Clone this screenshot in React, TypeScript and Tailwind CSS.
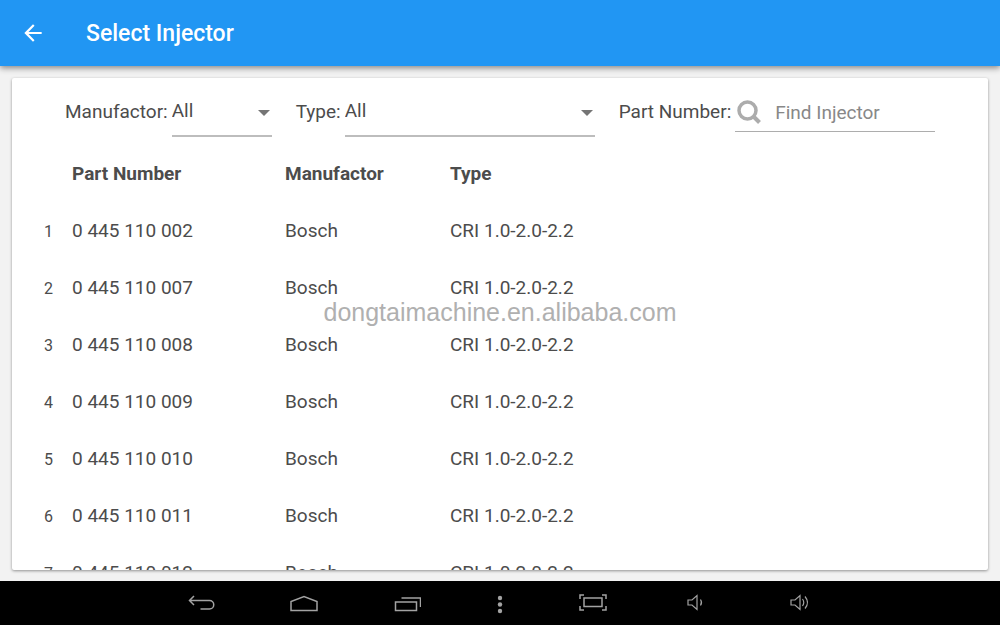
import type { ReactNode } from "react";

interface Injector {
  partNumber: string;
  manufactor: string;
  type: string;
}

const injectors: Injector[] = ["002", "007", "008", "009", "010", "011", "012"].map(
  (suffix) => ({
    partNumber: `0 445 110 ${suffix}`,
    manufactor: "Bosch",
    type: "CRI 1.0-2.0-2.2",
  })
);

interface FilterSelectProps {
  id: string;
  label: string;
  options: string[];
  className: string;
}

function FilterSelect({ id, label, options, className }: FilterSelectProps) {
  return (
    <div className="flex items-start gap-1">
      <label htmlFor={id} className="leading-9 whitespace-nowrap">
        {label}
      </label>
      <div className={`relative ${className}`}>
        <select
          id={id}
          className="block w-full h-[43px] pb-1.5 appearance-none bg-transparent border-b-2 border-[#bdbdbd] outline-none"
        >
          {options.map((option) => (
            <option key={option}>{option}</option>
          ))}
        </select>
        <svg
          viewBox="0 0 12 6"
          className="absolute right-0.5 top-4 w-3 h-1.5 fill-[#757575] pointer-events-none"
        >
          <path d="M0 0h12L6 6z" />
        </svg>
      </div>
    </div>
  );
}

interface NavButtonProps {
  label: string;
  narrow?: boolean;
  children: ReactNode;
}

function NavButton({ label, narrow, children }: NavButtonProps) {
  return (
    <button type="button" aria-label={label} className="block">
      <svg
        viewBox={narrow ? "0 0 8 20" : "0 0 28 20"}
        className={`${narrow ? "w-2" : "w-7"} h-5 fill-none stroke-[#a3a3a3]`}
        strokeWidth="1.5"
      >
        {children}
      </svg>
    </button>
  );
}

export default function App() {
  return (
    <div className="h-screen flex flex-col bg-[#f2f2f2] text-[19px] text-[#4c4c4c] font-[Roboto,sans-serif]">
      {/* App bar */}
      <header className="relative shrink-0 h-[66px] px-5 flex items-center gap-10 bg-[#2196f3] text-white shadow-[0_2px_6px_rgba(0,0,0,0.45)]">
        <button type="button" aria-label="Back">
          <svg viewBox="0 0 24 24" className="w-[26px] h-[26px] fill-white">
            <path d="M20 11H7.83l5.59-5.59L12 4l-8 8 8 8 1.41-1.41L7.83 13H20z" />
          </svg>
        </button>
        <h1 className="pt-0.5 text-[23px] font-medium">Select Injector</h1>
      </header>

      <main className="flex-1 min-h-0 px-3 pt-3 pb-[11px] flex flex-col">
        <section className="relative flex-1 min-h-0 overflow-hidden bg-white rounded-xs shadow-[0_1px_3px_rgba(0,0,0,0.4)]">
          {/* Filters */}
          <form className="flex items-start gap-6 pt-4 pl-[53px]">
            <FilterSelect
              id="manufactor"
              label="Manufactor:"
              options={["All", "Bosch"]}
              className="w-[100px]"
            />
            <FilterSelect
              id="type"
              label="Type:"
              options={["All", "CRI 1.0-2.0-2.2"]}
              className="w-[250px]"
            />
            <div className="flex items-start gap-1">
              <label htmlFor="search" className="leading-9 whitespace-nowrap">
                Part Number:
              </label>
              <div className="flex items-start w-[200px] h-[38px] border-b border-[#adadad]">
                <svg
                  viewBox="0 0 28 28"
                  className="shrink-0 w-7 h-7 mt-1 fill-none stroke-[#acacac]"
                  strokeWidth="3.5"
                >
                  <circle cx="12.5" cy="12.5" r="8.5" />
                  <path d="M18.5 18.5l6 6" strokeWidth="4" />
                </svg>
                <input
                  id="search"
                  type="text"
                  placeholder="Find Injector"
                  className="min-w-0 flex-1 h-9 ml-3 bg-transparent outline-none placeholder:text-[#888888]"
                />
              </div>
            </div>
          </form>

          {/* Injector list */}
          <table className="w-full mt-[9px] table-fixed text-left">
            <thead>
              <tr className="h-[57px]">
                <th className="w-[60px]" aria-label="No." />
                <th className="w-[213px] font-bold">Part Number</th>
                <th className="w-[165px] font-bold">Manufactor</th>
                <th className="font-bold">Type</th>
              </tr>
            </thead>
            <tbody>
              {injectors.map((injector, index) => (
                <tr key={injector.partNumber} className="h-[57px]">
                  <td className="pl-8 text-base">{index + 1}</td>
                  <td>{injector.partNumber}</td>
                  <td>{injector.manufactor}</td>
                  <td>{injector.type}</td>
                </tr>
              ))}
            </tbody>
          </table>
        </section>
      </main>

      {/* System navigation */}
      <nav className="shrink-0 h-11 pt-0.5 flex items-center justify-center gap-[75px] bg-black">
        <NavButton label="Back">
          <path d="M7 2L2.500 6.500 7 11M2.500 6.500h20a4 4 0 0 1 0 8.500h-9" />
        </NavButton>
        <NavButton label="Home">
          <path d="M1 16.500V7.500l13-5 13 5v9z" />
        </NavButton>
        <NavButton label="Recent apps">
          <path d="M2.500 8h21v8.500h-21zM8.500 4h19v9" />
        </NavButton>
        <NavButton label="More" narrow>
          <g className="fill-[#a3a3a3] stroke-none">
            <circle cx="4" cy="4" r="2.200" />
            <circle cx="4" cy="10.500" r="2.200" />
            <circle cx="4" cy="17" r="2.200" />
          </g>
        </NavButton>
        <NavButton label="Screenshot">
          <path d="M5 4h18v8.500H5zM1 5V1h4M23 1h4v4M27 12v4h-4M5 16H1v-4" />
        </NavButton>
        <NavButton label="Volume down">
          <path d="M6 6h4l5-4.500v14L10 11H6zM18.500 5.500q2 3 0 6" strokeWidth="1.200" />
        </NavButton>
        <NavButton label="Volume up">
          <path
            d="M6 6h4l5-4.500v14L10 11H6zM17.500 5q2.500 3.500 0 7M20 2.500q5 6 0 12"
            strokeWidth="1.200"
          />
        </NavButton>
      </nav>

      {/* Watermark */}
      <div className="absolute inset-x-0 top-[298px] text-center text-[25px] leading-7 text-[#b0b0b0] font-['Liberation_Sans',sans-serif] [text-shadow:0_1px_1px_#ffffff] pointer-events-none">
        dongtaimachine.en.alibaba.com
      </div>
    </div>
  );
}
